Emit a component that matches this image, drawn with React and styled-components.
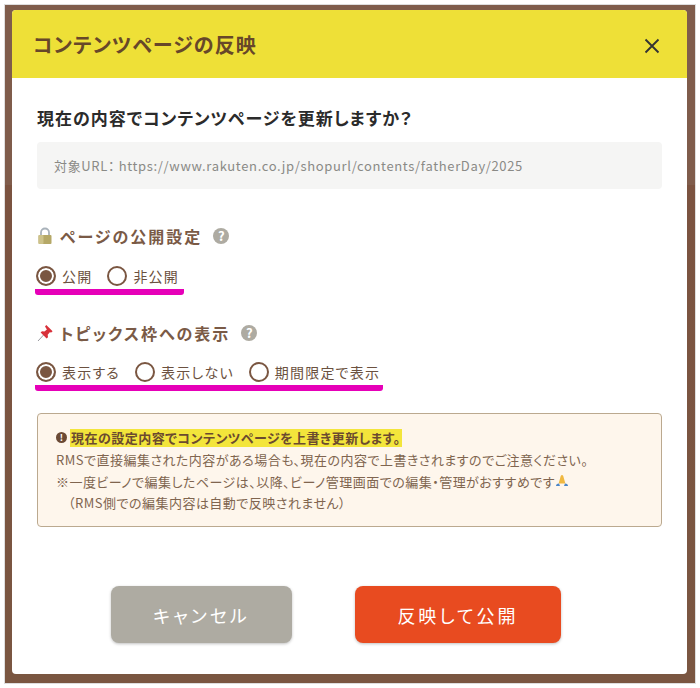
import React from 'react';
import styled, { createGlobalStyle } from 'styled-components';

const Global = createGlobalStyle`
  html, body { margin: 0; padding: 0; background: #fff; }
  body { font-family: "Noto Sans CJK JP", "Noto Sans", sans-serif; font-feature-settings: "palt"; }
  * { box-sizing: border-box; }
`;

const Frame = styled.div`
  width: 690px;
  height: 678px;
  margin: 5px 5px 5px 5px;
  padding: 5px 8px 9px 7px;
  background: linear-gradient(180deg, #7f5c4b 0, #7f5c4b 180px, #7b5340 180px, #7a5641 100%);
  box-shadow: 0 0 0 1px #dedede;
`;

const Modal = styled.div`
  width: 675px;
  height: 664px;
  background: #fff;
  border-radius: 4px;
  overflow: hidden;
  display: flex;
  flex-direction: column;
`;

const Header = styled.header`
  height: 68px;
  flex: none;
  background: #eee037;
  display: flex;
  align-items: center;
  justify-content: space-between;
  padding: 2px 27px 0 21px;
`;

const Title = styled.h1`
  margin: 0;
  font-size: 20px;
  line-height: 28px;
  font-weight: 700;
  letter-spacing: 1.1px;
  color: #674729;
`;

const Close = styled.button`
  border: 0;
  padding: 0;
  margin-top: 2px;
  width: 16px;
  height: 16px;
  background: none;
  display: flex;
  svg { display: block; }
`;

const Body = styled.div`
  padding: 27px 25px 0;
  flex: 1;
  display: flex;
  flex-direction: column;
`;

const Question = styled.h2`
  margin: 0;
  font-size: 17px;
  line-height: 26px;
  font-weight: 700;
  letter-spacing: 1px;
  color: #2b2b2b;
`;

const UrlBox = styled.div`
  margin-top: 11px;
  height: 47px;
  background: #f5f5f4;
  border-radius: 4px;
  padding: 0 17px;
  display: flex;
  align-items: center;
  font-size: 13px;
  letter-spacing: 0.66px;
  white-space: pre;
  color: #8a8a86;
`;

const SectionTitle = styled.h3`
  margin: ${p => p.$top}px 0 0;
  height: 26px;
  display: flex;
  align-items: center;
  font-size: 16px;
  line-height: 26px;
  font-weight: 700;
  letter-spacing: 2px;
  white-space: nowrap;
  color: #7a5a46;
`;

const Emoji = styled.span`
  width: 16px;
  height: 18px;
  margin-right: 7px;
  flex: none;
  display: flex;
  svg { display: block; }
`;

const Help = styled.span`
  width: 16px;
  height: 16px;
  margin-left: 11px;
  border-radius: 50%;
  background: #aeaba2;
  color: #fff;
  font-size: 13px;
  line-height: 16px;
  font-weight: 700;
  letter-spacing: 0;
  text-align: center;
`;

const RadioRow = styled.div`
  margin: ${p => p.$top}px 0 0 -2px;
  width: ${p => p.$width}px;
  display: flex;
  padding: 0 0 3px;
  height: 30px;
  gap: 14px;
  border-bottom: 6px solid #e600b8;
  border-radius: 3px;
`;

const Radio = styled.label`
  display: flex;
  align-items: center;
  gap: 6px;
  font-size: 14px;
  line-height: 20px;
  letter-spacing: 1.2px;
  white-space: nowrap;
  color: #6b5140;
  padding-left: 1px;
`;

const Dot = styled.span`
  width: 20px;
  height: 20px;
  border-radius: 50%;
  border: 2px solid #7a5641;
  background: ${p => p.$on ? '#7a5641' : '#fff'};
  box-shadow: ${p => p.$on ? 'inset 0 0 0 2px #fff' : 'none'};
  flex: none;
`;

const Notice = styled.div`
  margin-top: 22px;
  height: 114px;
  background: #fef6ec;
  border: 1.5px solid #bba98f;
  border-radius: 4px;
  padding: 12px 18px 0;
  font-size: 13px;
  line-height: 21.6px;
  letter-spacing: 0.48px;
  white-space: nowrap;
  color: #80654f;
`;

const NoticeHead = styled.div`
  display: flex;
  align-items: center;
  height: 23px;
  font-weight: 700;
  color: #6b4a2f;
`;

const Bang = styled.span`
  width: 11px;
  height: 11px;
  margin-right: 3px;
  border-radius: 50%;
  background: #6b4a35;
  color: #fff;
  font-size: 9px;
  line-height: 11px;
  text-align: center;
  letter-spacing: 0;
  flex: none;
`;

const Mark = styled.span`
  background: #f3e53b;
  height: 18px;
  line-height: 18px;
  padding: 0 1px;
`;

const Line = styled.div`
  padding-left: ${p => p.$indent || 0}px;
  display: flex;
  align-items: center;
  svg { display: block; flex: none; }
`;

const Actions = styled.div`
  margin: 59px 0 0 74px;
  display: flex;
  gap: 63px;
`;

const Button = styled.button`
  width: ${p => p.$width}px;
  height: 57px;
  border: 0;
  border-radius: 8px;
  background: ${p => p.$bg};
  color: #fff;
  font-family: inherit;
  font-feature-settings: inherit;
  font-size: 18px;
  letter-spacing: ${p => p.$spacing}px;
  box-shadow: 0 1px 3px rgba(0,0,0,.25);
`;

const Lock = () => (
  <svg width="16" height="18" viewBox="0 0 16 18">
    <path d="M4 9V5.5a4 4 0 0 1 8 0V9" fill="none" stroke="#a9b2ba" strokeWidth="1.8" />
    <rect x="1.5" y="8" width="13" height="9" rx="1" fill="#b5a867" />
    <rect x="1.5" y="8" width="5" height="9" rx="1" fill="#cdc28a" />
  </svg>
);

const Pin = () => (
  <svg width="16" height="18" viewBox="0 0 16 18">
    <path d="M1 17 7 10.5" stroke="#9a9aa0" strokeWidth="1" />
    <path d="M9.3 1 15.6 7.3 14.2 8.6 12.8 8.2 10.7 10.8 11 13.2 9.6 14.6 3.6 8.6 5 7.2 7.4 7.6 9.9 5.4 8 2.4z" fill="#d8313a" />
  </svg>
);

const Pray = () => (
  <svg width="14" height="14" viewBox="0 0 14 14">
    <path d="M7 1C6 1 5.6 2 5.2 4L3.6 9.5h6.8L8.8 4C8.4 2 8 1 7 1z" fill="#f0b840" />
    <path d="M1 12c0-1.3 1-2.5 3-2.5l1 2.5zM13 12c0-1.3-1-2.5-3-2.5L9 12z" fill="#4a86c8" />
  </svg>
);

export default function App() {
  return (
    <>
      <Global />
      <Frame>
        <Modal>
          <Header>
            <Title>コンテンツページの反映</Title>
            <Close aria-label="閉じる">
              <svg width="16" height="16" viewBox="0 0 16 16">
                <path d="M1.5 1.5l13 13M14.5 1.5l-13 13" stroke="#333" strokeWidth="1.9" fill="none" />
              </svg>
            </Close>
          </Header>
          <Body>
            <Question>現在の内容でコンテンツページを更新しますか？</Question>
            <UrlBox>対象URL： https://www.rakuten.co.jp/shopurl/contents/fatherDay/2025</UrlBox>

            <SectionTitle $top={34}>
              <Emoji><Lock /></Emoji>ページの公開設定<Help>?</Help>
            </SectionTitle>
            <RadioRow $top={16} $width={149}>
              <Radio><Dot $on />公開</Radio>
              <Radio><Dot />非公開</Radio>
            </RadioRow>

            <SectionTitle $top={25}>
              <Emoji><Pin /></Emoji>トピックス枠への表示<Help>?</Help>
            </SectionTitle>
            <RadioRow $top={15} $width={348}>
              <Radio><Dot $on />表示する</Radio>
              <Radio><Dot />表示しない</Radio>
              <Radio><Dot />期間限定で表示</Radio>
            </RadioRow>

            <Notice>
              <NoticeHead><Bang>!</Bang><Mark>現在の設定内容でコンテンツページを上書き更新します。</Mark></NoticeHead>
              <Line>RMSで直接編集された内容がある場合も、現在の内容で上書きされますのでご注意ください。</Line>
              <Line>※一度ビーノで編集したページは、以降、ビーノ管理画面での編集・管理がおすすめです<Pray /></Line>
              <Line $indent={12}>（RMS側での編集内容は自動で反映されません）</Line>
            </Notice>

            <Actions>
              <Button $width={181} $bg="#aeaba2" $spacing={3}>キャンセル</Button>
              <Button $width={206} $bg="#e84b20" $spacing={3}>反映して公開</Button>
            </Actions>
          </Body>
        </Modal>
      </Frame>
    </>
  );
}
